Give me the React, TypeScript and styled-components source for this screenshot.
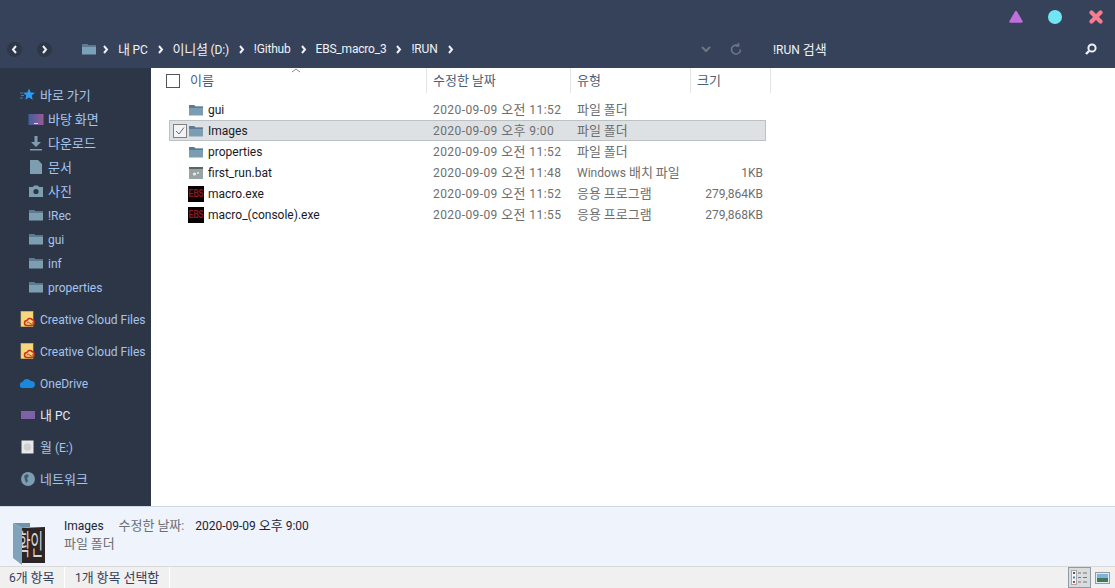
import { Fragment } from 'react';
import styled, { createGlobalStyle } from 'styled-components';

const GlobalStyle = createGlobalStyle`
  html, body {
    margin: 0;
    padding: 0;
    overflow: hidden;
  }
  body {
    font-family: Roboto, "Noto Sans CJK KR", sans-serif;
    font-size: 12px;
  }
`;

const Window = styled.div`
  width: 1115px;
  height: 588px;
  display: flex;
  flex-direction: column;
  background: #fff;
  overflow: hidden;
`;
const Hangul = styled.span`
  font-family: "Noto Sans CJK KR", sans-serif;
  font-size: 13px;
  line-height: 1;
`;
const TitleBar = styled.div`
  height: 34px;
  background: #364259;
  display: flex;
  justify-content: flex-end;
  align-items: center;
  padding-right: 12px;
  box-sizing: border-box;
`;
const WindowButton = styled.svg<{ $left?: number }>`
  width: 14px;
  height: 14px;
  display: block;
  margin-left: ${(p) => p.$left ?? 0}px;
`;
const NavBar = styled.div`
  height: 34px;
  background: #364259;
  display: flex;
  align-items: center;
  padding-bottom: 4px;
  box-sizing: border-box;
  color: #eef2f8;
`;
const NavButton = styled.div<{ $left: number }>`
  width: 15px;
  height: 15px;
  border-radius: 50%;
  background: #2d3748;
  display: flex;
  align-items: center;
  justify-content: center;
  margin-left: ${(p) => p.$left}px;
`;
const Crumbs = styled.div`
  display: flex;
  align-items: center;
  margin-left: 29px;
  width: 619px;
  flex: none;
`;
const CrumbFolder = styled.svg`
  width: 16px;
  height: 16px;
  margin-right: 5px;
  flex: none;
`;
const CrumbText = styled.span`
  white-space: nowrap;
  margin: 0 9px;
  letter-spacing: -0.2px;
`;
const SearchArea = styled.div`
  display: flex;
  align-items: center;
  flex: 1;
`;
const RefreshIcon = styled.svg`
  width: 14px;
  height: 14px;
  margin-left: 17px;
`;
const SearchText = styled.span`
  margin-left: 30px;
  flex: 1;
`;
const SearchIcon = styled.svg`
  width: 14px;
  height: 14px;
  margin-right: 17px;
`;
const Body = styled.div`
  flex: 1;
  display: flex;
  min-height: 0;
`;
const Sidebar = styled.nav`
  width: 151px;
  background: #2d3646;
  padding-top: 15px;
  box-sizing: border-box;
  flex: none;
`;
const SideItem = styled.div<{ $sub?: boolean; $white?: boolean; $short?: boolean }>`
  height: ${(p) => (p.$sub || p.$short ? 24 : 32)}px;
  display: flex;
  align-items: center;
  gap: 4px;
  padding-left: ${(p) => (p.$sub ? 28 : 20)}px;
  color: ${(p) => (p.$white ? '#e6ecf6' : '#a6c4ee')};
  white-space: nowrap;
`;
const SideLatin = styled.span`
  padding-top: 2px;
`;
const SideIcon = styled.svg`
  width: 16px;
  height: 16px;
  flex: none;
`;
const SideGap = styled.div`
  height: 4px;
`;
const Content = styled.main`
  flex: 1;
  background: #fff;
  position: relative;
`;
const HeaderRow = styled.div`
  display: flex;
  height: 25px;
  color: #4c5f78;
`;
const HeaderCell = styled.div<{ $w: number; $pad?: number }>`
  width: ${(p) => p.$w}px;
  padding-left: ${(p) => p.$pad ?? 6}px;
  box-sizing: border-box;
  border-right: 1px solid #e5e5e5;
  display: flex;
  align-items: center;
  flex: none;
`;
const HeadCheck = styled.span`
  width: 12px;
  height: 12px;
  border: 1px solid #555;
  margin-right: 10px;
  flex: none;
`;
const SortArrow = styled.svg`
  position: absolute;
  left: 140px;
  top: 0;
  width: 10px;
  height: 5px;
`;
const Rows = styled.div`
  padding: 6px 0 0 18px;
`;
const Row = styled.div<{ $selected?: boolean }>`
  width: 597px;
  height: 21px;
  box-sizing: border-box;
  display: flex;
  align-items: center;
  background: ${(p) => (p.$selected ? '#dee1e4' : 'transparent')};
  border: 1px solid ${(p) => (p.$selected ? '#bcc1c5' : 'transparent')};
`;
const RowCheck = styled.span`
  width: 12px;
  height: 12px;
  border: 1px solid #808080;
  background: #f2f3f4;
  margin-left: 3px;
  display: flex;
  flex: none;
`;
const RowCheckGap = styled.span`
  width: 17px;
  flex: none;
`;
const NameCell = styled.div`
  width: 246px;
  flex: none;
  display: flex;
  align-items: center;
  gap: 4px;
  padding-left: 1px;
  box-sizing: border-box;
  color: #1a1a26;
`;
const RowIcon = styled.svg`
  width: 16px;
  height: 16px;
  flex: none;
`;
const ExeIcon = styled.span`
  width: 16px;
  height: 16px;
  background: #060002;
  flex: none;
  display: flex;
  align-items: center;
  justify-content: center;
  overflow: hidden;
`;
const ExeMark = styled.span`
  color: #8e1a22;
  font: bold 7.5px "Liberation Sans", sans-serif;
  letter-spacing: -0.2px;
  transform: scaleY(1.35);
`;
const DateCell = styled.div`
  width: 144px;
  flex: none;
  color: #6e6e6e;
  white-space: nowrap;
  letter-spacing: 0.42px;
`;
const TypeCell = styled.div`
  width: 120px;
  flex: none;
  color: #6e6e6e;
  white-space: nowrap;
`;
const SizeCell = styled.div`
  width: 66px;
  flex: none;
  color: #6e6e6e;
  text-align: right;
  white-space: nowrap;
`;
const Details = styled.section`
  height: 60px;
  background: #eff3fb;
  border-top: 1px solid #cfd8e6;
  box-sizing: border-box;
  display: flex;
  padding-left: 13px;
`;
const Thumb = styled.svg`
  width: 32px;
  height: 44px;
  margin-top: 15px;
  flex: none;
`;
const DetailText = styled.div`
  margin-left: 19px;
  padding-top: 10px;
  line-height: 18px;
`;
const DetailLine = styled.div`
  display: flex;
  white-space: nowrap;
  color: #1a2433;
`;
const DetailLabel = styled.span`
  color: #6c6f75;
  margin: 0 11px 0 15px;
`;
const DetailSub = styled.div`
  color: #6c6f75;
`;
const StatusBar = styled.footer`
  height: 22px;
  background: #f0f0f0;
  border-top: 1px solid #d9d9d9;
  box-sizing: border-box;
  display: flex;
  align-items: center;
  color: #35425c;
`;
const StatusCell = styled.div<{ $w: number }>`
  width: ${(p) => p.$w}px;
  height: 100%;
  box-sizing: border-box;
  padding-left: ${(p) => (p.$w > 80 ? 10 : 9)}px;
  border-right: 1px solid #fff;
  display: flex;
  align-items: center;
  white-space: nowrap;
`;
const StatusFill = styled.div`
  flex: 1;
`;
const ViewButton = styled.div<{ $active?: boolean }>`
  width: 23px;
  height: 21px;
  box-sizing: border-box;
  display: flex;
  align-items: center;
  justify-content: center;
  margin-right: ${(p) => (p.$active ? 0 : 1)}px;
  background: ${(p) => (p.$active ? '#d9dcde' : 'transparent')};
  border: 1px solid ${(p) => (p.$active ? '#8f9aa3' : 'transparent')};
`;

// hangul runs are drawn a size up, the way Malgun Gothic sits next to Segoe UI
const Txt = ({ children }: { children: string }) => (
  <span>
    {children
      .split(/([가-힣]+(?:\s+[가-힣]+)*)/)
      .map((part, i) => (i % 2 ? <Hangul key={i}>{part}</Hangul> : part))}
  </span>
);

const Chevron = ({ dir = 'right' }: { dir?: 'left' | 'right' }) => (
  <svg width='7' height='9' viewBox='0 0 7 9'>
    <path
      d={dir === 'right' ? 'M2 1l3 3.5L2 8' : 'M5 1L2 4.5 5 8'}
      fill='none'
      stroke='#eef2f8'
      strokeWidth='2'
    />
  </svg>
);

const FolderShape = ({ color = '#7b9db3' }: { color?: string }) => (
  <>
    <path d='M1 3h5l1.5 1.5H15V13.5H1z' fill={color} />
    <path d='M1 3h5l1.5 1.5H15V6H1z' fill='#5d7c92' />
  </>
);

const CloudFilesIcon = () => (
  <SideIcon viewBox='0 0 16 16'>
    <rect x='1' y='0.5' width='12' height='15' fill='#f6d77c' stroke='#e8c35c' strokeWidth='0.6' />
    <path
      d='M7 14.5a2.5 2.5 0 0 1 0-5c.5-2 3.5-3 5-1a2.6 2.6 0 0 1 2 3 2.5 2.5 0 0 1-2 3z'
      fill='#f6d77c'
      stroke='#d42a1a'
      strokeWidth='1.5'
    />
    <path d='M7 12.5a1.2 1.2 0 0 1 2-1l2 1.5a1.2 1.2 0 0 0 1.500-1.500' fill='none' stroke='#d42a1a' strokeWidth='1' />
  </SideIcon>
);

const quickFolders = ['!Rec', 'gui', 'inf', 'properties'];

interface FileRow {
  name: string;
  date: string;
  type: string;
  size?: string;
  kind: 'folder' | 'bat' | 'exe';
  selected?: boolean;
}

const files: FileRow[] = [
  { name: 'gui', date: '2020-09-09 오전 11:52', type: '파일 폴더', kind: 'folder' },
  { name: 'Images', date: '2020-09-09 오후 9:00', type: '파일 폴더', kind: 'folder', selected: true },
  { name: 'properties', date: '2020-09-09 오전 11:52', type: '파일 폴더', kind: 'folder' },
  { name: 'first_run.bat', date: '2020-09-09 오전 11:48', type: 'Windows 배치 파일', size: '1KB', kind: 'bat' },
  { name: 'macro.exe', date: '2020-09-09 오전 11:52', type: '응용 프로그램', size: '279,864KB', kind: 'exe' },
  { name: 'macro_(console).exe', date: '2020-09-09 오전 11:55', type: '응용 프로그램', size: '279,868KB', kind: 'exe' },
];

const FileIcon = ({ kind }: { kind: FileRow['kind'] }) => {
  if (kind === 'exe')
    return (
      <ExeIcon>
        <ExeMark>EBS</ExeMark>
      </ExeIcon>
    );
  if (kind === 'bat')
    return (
      <RowIcon viewBox='0 0 16 16'>
        <rect x='1' y='2' width='14' height='12' fill='#98a3a3' />
        <rect x='1' y='2' width='14' height='2' fill='#5c6464' />
        <circle cx='6.5' cy='9' r='1.6' fill='#e8ecec' />
        <circle cx='10' cy='8' r='1' fill='#e8ecec' />
      </RowIcon>
    );
  return (
    <RowIcon viewBox='0 0 16 16'>
      <FolderShape />
    </RowIcon>
  );
};

const crumbs = ['내 PC', '이니셜 (D:)', '!Github', 'EBS_macro_3', '!RUN'];

const App = () => {
  return (
    <Window>
      <GlobalStyle />
      <TitleBar>
        <WindowButton viewBox='0 0 14 14'>
          <path d='M7 2l5.500 9.500h-11z' fill='#bf6fdc' stroke='#bf6fdc' strokeWidth='2.4' strokeLinejoin='round' />
        </WindowButton>
        <WindowButton viewBox='0 0 14 14' $left={25}>
          <circle cx='7' cy='7' r='7' fill='#70e6f4' />
        </WindowButton>
        <WindowButton viewBox='0 0 14 14' $left={27}>
          <path d='M2.500 2.500l9 9M11.500 2.500l-9 9' stroke='#f67c90' strokeWidth='4.2' strokeLinecap='round' />
        </WindowButton>
      </TitleBar>
      <NavBar>
        <NavButton $left={7}>
          <Chevron dir='left' />
        </NavButton>
        <NavButton $left={15}>
          <Chevron />
        </NavButton>
        <Crumbs>
          <CrumbFolder viewBox='0 0 16 16'>
            <FolderShape color='#7ba0ba' />
          </CrumbFolder>
          {crumbs.map((crumb) => (
            <Fragment key={crumb}>
              <Chevron />
              <CrumbText>
                <Txt>{crumb}</Txt>
              </CrumbText>
            </Fragment>
          ))}
          <Chevron />
        </Crumbs>
        <SearchArea>
          <svg width='12' height='12' viewBox='0 0 12 12'>
            <path d='M2 4l4 4 4-4' fill='none' stroke='#6f7785' strokeWidth='2' />
          </svg>
          <RefreshIcon viewBox='0 0 14 14'>
            <path d='M11.500 7.500a4.500 4.500 0 1 1-2-3.700M9.500 1v3h-3' fill='none' stroke='#6f7785' strokeWidth='1.6' />
          </RefreshIcon>
          <SearchText>
            <Txt>!RUN 검색</Txt>
          </SearchText>
          <SearchIcon viewBox='0 0 14 14'>
            <circle cx='8' cy='6' r='3.6' fill='none' stroke='#eef2f8' strokeWidth='2' />
            <path d='M5 9l-3 3' stroke='#eef2f8' strokeWidth='2.4' />
          </SearchIcon>
        </SearchArea>
      </NavBar>
      <Body>
        <Sidebar>
          <SideItem $short>
            <SideIcon viewBox='0 0 16 16'>
              <path d='M9 1.500l1.700 4 4.300.3-3.300 2.800 1 4.200L9 10.500l-3.700 2.300 1-4.200L3 5.800l4.300-.3z' fill='#2a9df4' />
              <path d='M0 6h3M1 8.500h3M0 11h3' stroke='#2a9df4' strokeWidth='0.8' />
            </SideIcon>
            <Txt>바로 가기</Txt>
          </SideItem>
          <SideItem $sub>
            <SideIcon viewBox='0 0 16 16'>
              <defs>
                <linearGradient id='desk' x1='0' y1='0' x2='1' y2='0'>
                  <stop offset='0' stopColor='#3f5fa0' />
                  <stop offset='1' stopColor='#9c5a92' />
                </linearGradient>
              </defs>
              <rect x='0.5' y='3' width='15' height='11' fill='url(#desk)' />
              <rect x='6' y='12' width='4' height='1' fill='#d8dde6' />
            </SideIcon>
            <Txt>바탕 화면</Txt>
          </SideItem>
          <SideItem $sub>
            <SideIcon viewBox='0 0 16 16'>
              <path d='M6.500 1h3v6H13l-5 5-5-5h3.500z' fill='#7d9db0' />
              <rect x='2' y='14' width='12' height='1.500' fill='#7d9db0' />
            </SideIcon>
            <Txt>다운로드</Txt>
          </SideItem>
          <SideItem $sub>
            <SideIcon viewBox='0 0 16 16'>
              <path d='M2 1h8l4 4v10H2z' fill='#7d9db0' />
            </SideIcon>
            <Txt>문서</Txt>
          </SideItem>
          <SideItem $sub>
            <SideIcon viewBox='0 0 16 16'>
              <path d='M1 4h4l1-1.500h4L11 4h4v10H1z' fill='#7d9db0' />
              <circle cx='8' cy='8.500' r='2.600' fill='#2d3646' />
            </SideIcon>
            <Txt>사진</Txt>
          </SideItem>
          {quickFolders.map((name) => (
            <SideItem $sub key={name}>
              <SideIcon viewBox='0 0 16 16'>
                <FolderShape color='#7d9db0' />
              </SideIcon>
              <SideLatin>{name}</SideLatin>
            </SideItem>
          ))}
          <SideGap />
          <SideItem>
            <CloudFilesIcon />
            <SideLatin>Creative Cloud Files</SideLatin>
          </SideItem>
          <SideItem>
            <CloudFilesIcon />
            <SideLatin>Creative Cloud Files</SideLatin>
          </SideItem>
          <SideItem>
            <SideIcon viewBox='0 0 16 16'>
              <path d='M3 13a3 3 0 0 1-.5-6A5 5 0 0 1 11 6a3.500 3.500 0 0 1 4 3.500A3.500 3.500 0 0 1 12 13z' fill='#1b88dc' />
            </SideIcon>
            <SideLatin>OneDrive</SideLatin>
          </SideItem>
          <SideItem $white>
            <SideIcon viewBox='0 0 16 16'>
              <rect x='1' y='4' width='14' height='8' fill='#7d62a6' />
            </SideIcon>
            <Txt>내 PC</Txt>
          </SideItem>
          <SideItem>
            <SideIcon viewBox='0 0 16 16'>
              <rect x='1.500' y='1.500' width='12' height='13' fill='#e8e8e8' />
              <circle cx='7.500' cy='8' r='3.800' fill='#d0d0d0' />
            </SideIcon>
            <Txt>월 (E:)</Txt>
          </SideItem>
          <SideItem>
            <SideIcon viewBox='0 0 16 16'>
              <circle cx='8' cy='8' r='7' fill='#7d9db0' />
              <path d='M4 5l3-2 2 2-2 2 1 3-2 2-1-3z' fill='#3f5a6c' />
            </SideIcon>
            <Txt>네트워크</Txt>
          </SideItem>
        </Sidebar>
        <Content>
          <SortArrow viewBox='0 0 10 5'>
            <path d='M1 4l4-3 4 3' fill='none' stroke='#8a8a8a' />
          </SortArrow>
          <HeaderRow>
            <HeaderCell $w={276} $pad={15}>
              <HeadCheck />
              <Txt>이름</Txt>
            </HeaderCell>
            <HeaderCell $w={144}>
              <Txt>수정한 날짜</Txt>
            </HeaderCell>
            <HeaderCell $w={120}>
              <Txt>유형</Txt>
            </HeaderCell>
            <HeaderCell $w={80}>
              <Txt>크기</Txt>
            </HeaderCell>
          </HeaderRow>
          <Rows>
            {files.map((file) => (
              <Row key={file.name} $selected={file.selected}>
                {file.selected ? (
                  <RowCheck>
                    <svg width='12' height='12' viewBox='0 0 12 12'>
                      <path d='M2 6l3 3 5-6.500' fill='none' stroke='#6b6b6b' />
                    </svg>
                  </RowCheck>
                ) : (
                  <RowCheckGap />
                )}
                <NameCell>
                  <FileIcon kind={file.kind} />
                  {file.name}
                </NameCell>
                <DateCell>
                  <Txt>{file.date}</Txt>
                </DateCell>
                <TypeCell>
                  <Txt>{file.type}</Txt>
                </TypeCell>
                <SizeCell>{file.size}</SizeCell>
              </Row>
            ))}
          </Rows>
        </Content>
      </Body>
      <Details>
        <Thumb viewBox='0 0 32 44'>
          <path d='M7 6l25-1v36H7z' fill='#2d2526' />
          <clipPath id='thumb-clip'>
            <path d='M7 6l25-1v36H7z' />
          </clipPath>
          <g clipPath='url(#thumb-clip)'>
            <text transform='translate(5 33) scale(0.85 1.8)' fontSize='16' fill='#d8d4d2' fontFamily='Noto Sans CJK KR'>
              확인
            </text>
          </g>
          <path d='M0 1h17v4l-8 1z' fill='#6f93aa' />
          <path d='M0 1l9 5v37l-9-7z' fill='#7fa3ba' />
        </Thumb>
        <DetailText>
          <DetailLine>
            Images
            <DetailLabel>
              <Txt>수정한 날짜:</Txt>
            </DetailLabel>
            <Txt>2020-09-09 오후 9:00</Txt>
          </DetailLine>
          <DetailSub>
            <Txt>파일 폴더</Txt>
          </DetailSub>
        </DetailText>
      </Details>
      <StatusBar>
        <StatusCell $w={65}>
          <Txt>6개 항목</Txt>
        </StatusCell>
        <StatusCell $w={105}>
          <Txt>1개 항목 선택함</Txt>
        </StatusCell>
        <StatusFill />
        <ViewButton $active>
          <svg width='17' height='15' viewBox='0 0 17 15'>
            <rect x='0.5' y='0.5' width='5' height='14' fill='#f4f4f4' stroke='#a8a8a8' />
            <rect x='2' y='2' width='2' height='2' fill='#555' />
            <rect x='2' y='6.500' width='2' height='2' fill='#3f7fc0' />
            <rect x='2' y='11' width='2' height='2' fill='#c03f3f' />
            <path d='M7 3h3M12 3h4M7 7.500h3M12 7.500h4M7 12h3M12 12h4' stroke='#777' />
          </svg>
        </ViewButton>
        <ViewButton>
          <svg width='15' height='12' viewBox='0 0 15 12'>
            <rect x='0.5' y='0.5' width='14' height='11' fill='#dfeaf2' stroke='#9a9a9a' />
            <rect x='2' y='2' width='11' height='4' fill='#7fb2dc' />
            <rect x='2' y='6' width='11' height='4' fill='#3f7a5a' />
          </svg>
        </ViewButton>
      </StatusBar>
    </Window>
  );
};

export default App;
